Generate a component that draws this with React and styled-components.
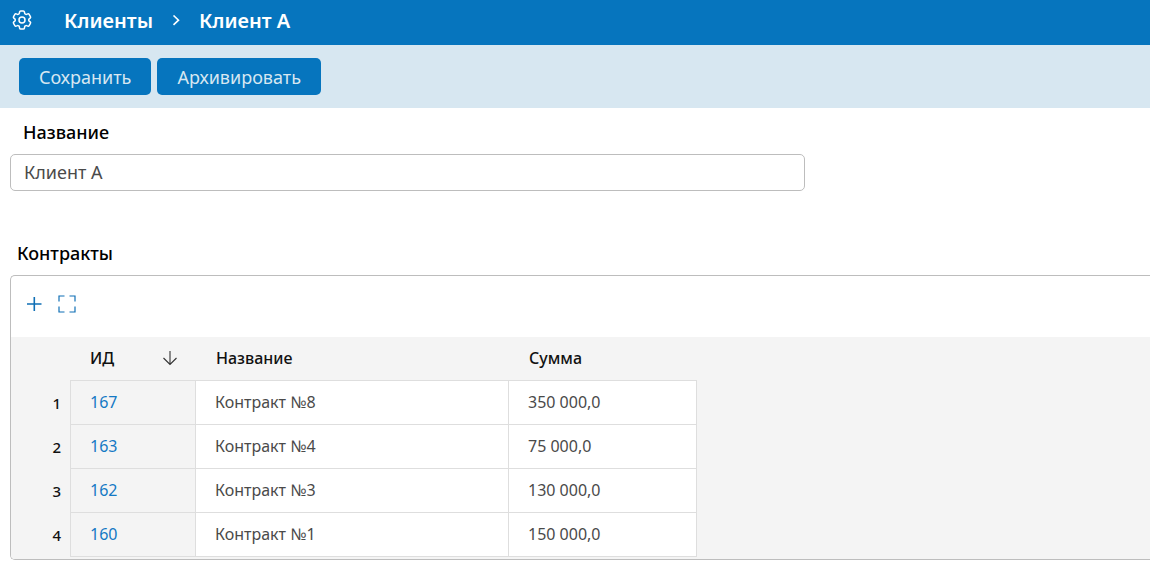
import { useState } from "react";
import styled, { createGlobalStyle } from "styled-components";
import { HiOutlineCog6Tooth } from "react-icons/hi2";

const GlobalStyle = createGlobalStyle`
  * {
    box-sizing: border-box;
  }

  body {
    margin: 0;
    background: #fff;
    color: #111;
    font-family: "Noto Sans", "Open Sans", sans-serif;
  }
`

const TopBar = styled.header`
  display: flex;
  align-items: center;
  height: 45px;
  padding: 0 10px 5px;
  gap: 30px;
  background: #0675be;
  color: #fff;
`

const IconButton = styled.button`
  display: flex;
  padding: 0;
  border: 0;
  background: none;
  color: inherit;
  cursor: pointer;
`

const Breadcrumbs = styled.nav`
  display: flex;
  align-items: center;
  gap: 18px;
  padding-top: 2px;
  font-size: 20px;
  font-weight: 600;
  line-height: 26px;

  a {
    color: inherit;
    text-decoration: none;
  }
`

const Actions = styled.div`
  display: flex;
  gap: 6px;
  padding: 13px 19px;
  background: #d7e7f1;
`

const ActionButton = styled.button`
  height: 37px;
  padding: 0 20px;
  border: 0;
  border-radius: 5px;
  background: #0675be;
  color: #d7e7f1;
  font-family: inherit;
  font-size: 18px;
  cursor: pointer;
`

const Form = styled.main`
  padding: 12px 0 0 10px;
`

const Field = styled.div`
  display: flex;
  flex-direction: column;
  width: calc(70vw - 10px);
  margin-bottom: 50px;
`

const Label = styled.label`
  padding: 0 13px;
  margin-bottom: 10px;
  color: #000;
  font-size: 18px;
  font-weight: 500;
  line-height: 24px;
`

const TextInput = styled.input`
  height: 37px;
  padding: 0 13px 2px;
  border: 1px solid #bdbdbd;
  border-radius: 5px;
  background: #fff;
  color: #4a4a4a;
  font-family: inherit;
  font-size: 18px;
`

const SectionTitle = styled.h2`
  margin: 0 7px 10px;
  color: #000;
  font-size: 18px;
  font-weight: 500;
  line-height: 24px;
`

const Panel = styled.section`
  border: 1px solid #bdbdbd;
  border-right: 0;
  border-radius: 5px 0 0 5px;
  overflow: hidden;
`

const PanelTools = styled.div`
  display: flex;
  align-items: center;
  gap: 16px;
  height: 61px;
  padding: 0 15px 5px;
  color: #0f6fb5;
`

const TableArea = styled.div`
  padding-bottom: 2px;
  background: #f4f4f4;
`

const Table = styled.table`
  border-collapse: separate;
  border-spacing: 0;
  table-layout: fixed;
  width: 686px;
  font-size: 16px;
`

const HeadCell = styled.th`
  width: ${props => props.$width}px;
  height: 44px;
  padding: 0 18px 2px 20px;
  border-bottom: 1px solid ${props => props.$plain ? "transparent" : "#dedede"};
  font-weight: 500;
  text-align: left;
`

const SortHead = styled.div`
  display: flex;
  align-items: center;
  justify-content: space-between;
`

const RowNumber = styled.th`
  padding: 0 9px 0 0;
  font-size: 15px;
  font-weight: 500;
  text-align: right;
`

const Cell = styled.td`
  height: 44px;
  padding: 0 19px 2px;
  border-right: 1px solid #dedede;
  border-bottom: 1px solid #dedede;
  border-left: ${props => props.$first ? "1px solid #dedede" : "0"};
  background: ${props => props.$first ? "#f4f4f4" : "#fff"};
  color: #4a4a4a;

  a {
    color: #1479c4;
    text-decoration: none;
  }
`

const contracts = [
  { id: 167, name: "Контракт №8", sum: "350 000,0" },
  { id: 163, name: "Контракт №4", sum: "75 000,0" },
  { id: 162, name: "Контракт №3", sum: "130 000,0" },
  { id: 160, name: "Контракт №1", sum: "150 000,0" },
]

const ChevronIcon = () => (
  <svg width="10" height="12" viewBox="0 0 10 12" fill="none" stroke="currentColor" strokeWidth="1.6">
    <path d="M2.5 0.500l5 4.700-5 4.700" />
  </svg>
)

const PlusIcon = () => (
  <svg width="16" height="16" viewBox="0 0 16 16" fill="none" stroke="currentColor" strokeWidth="1.6">
    <path d="M8.3 1v14M1 8h14.5" />
  </svg>
)

const ExpandIcon = () => (
  <svg width="18" height="18" viewBox="0 0 18 18" fill="none" stroke="currentColor" strokeWidth="1.2">
    <path d="M1 6.5V1h5.5M11.5 1H17v5.5M17 11.5V17h-5.5M6.5 17H1v-5.5" />
  </svg>
)

const ArrowDownIcon = () => (
  <svg width="16" height="16" viewBox="0 0 16 16" fill="none" stroke="#333" strokeWidth="1.1">
    <path d="M8 1v13.5M1.5 8L8 14.5 14.5 8" />
  </svg>
)

const App = () => {
  const [name, setName] = useState("Клиент А")

  return (
    <>
      <GlobalStyle />
      <TopBar>
        <IconButton type="button" aria-label="Настройки">
          <HiOutlineCog6Tooth size={24} />
        </IconButton>
        <Breadcrumbs>
          <a href="#clients">Клиенты</a>
          <ChevronIcon />
          <a href="#client">Клиент А</a>
        </Breadcrumbs>
      </TopBar>
      <Actions>
        <ActionButton type="button">Сохранить</ActionButton>
        <ActionButton type="button">Архивировать</ActionButton>
      </Actions>
      <Form>
        <Field>
          <Label htmlFor="name">Название</Label>
          <TextInput id="name" type="text" value={name} onChange={e => setName(e.target.value)} />
        </Field>
        <SectionTitle id="contracts">Контракты</SectionTitle>
        <Panel aria-labelledby="contracts">
          <PanelTools>
            <IconButton type="button" aria-label="Добавить"><PlusIcon /></IconButton>
            <IconButton type="button" aria-label="Развернуть"><ExpandIcon /></IconButton>
          </PanelTools>
          <TableArea>
            <Table>
              <thead>
                <tr>
                  <HeadCell as="td" $width={59} $plain />
                  <HeadCell $width={126}>
                    <SortHead>ИД <ArrowDownIcon /></SortHead>
                  </HeadCell>
                  <HeadCell $width={313}>Название</HeadCell>
                  <HeadCell $width={188}>Сумма</HeadCell>
                </tr>
              </thead>
              <tbody>
                {contracts.map((item, index) => (
                  <tr key={item.id}>
                    <RowNumber scope="row">{index + 1}</RowNumber>
                    <Cell $first><a href={`#${item.id}`}>{item.id}</a></Cell>
                    <Cell>{item.name}</Cell>
                    <Cell>{item.sum}</Cell>
                  </tr>
                ))}
              </tbody>
            </Table>
          </TableArea>
        </Panel>
      </Form>
    </>
  )
}

export default App;
